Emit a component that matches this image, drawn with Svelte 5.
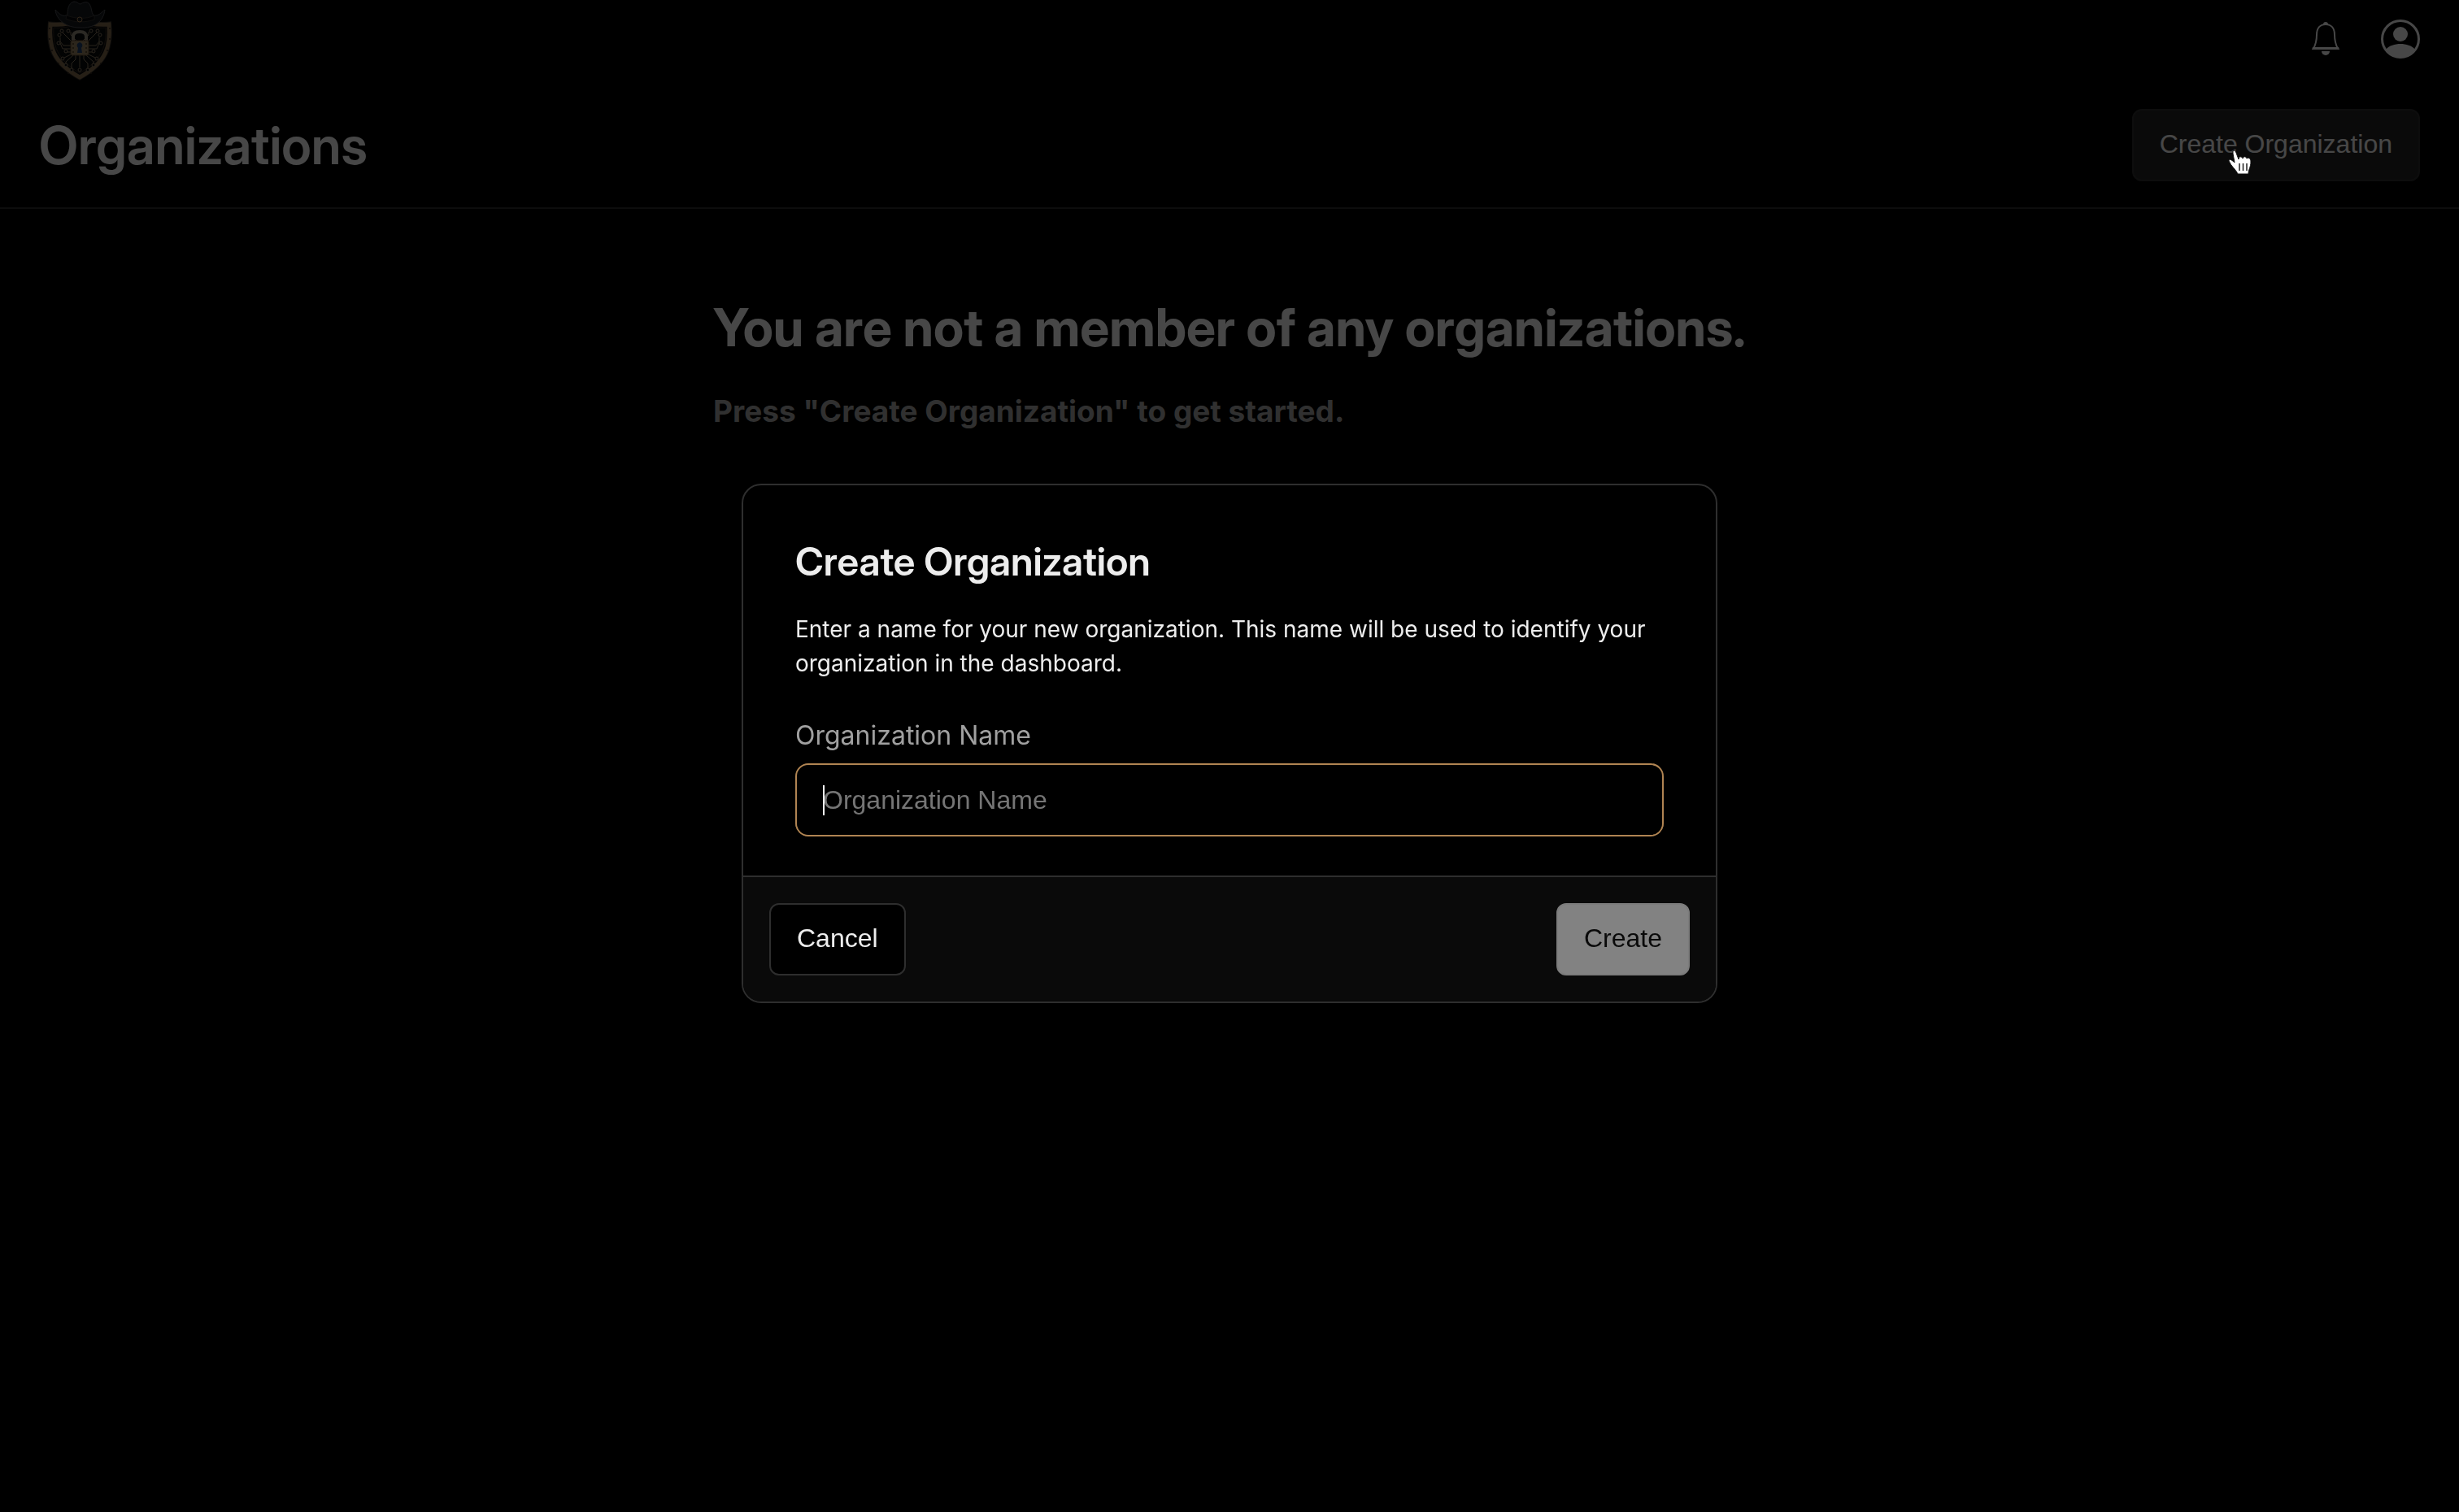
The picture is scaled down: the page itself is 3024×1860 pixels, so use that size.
<script lang="ts">
  let name: string = "";

  // circuit traces of the shield, mirrored around the lock
  const traces = [
    { d: "M49 56H38L34 51V46", x: 33, y: 43 },
    { d: "M49 60H37L34 53H33", x: 32, y: 53 },
    { d: "M49 64H42", x: 41, y: 63 },
    { d: "M50 68L41 76V78", x: 41, y: 80 },
    { d: "M53 68V73L48 78V84", x: 48, y: 86 },
    { d: "M55 51L47 43V39", x: 44, y: 38 },
    { d: "M50 53L42 45L37 40", x: 36, y: 38 },
    { d: "M49 66L39 71", x: 37, y: 72 },
  ];

  const rivets = [[21, 35], [21, 48], [24, 62], [32, 78], [44, 90]];
</script>

<div class="page">
  <header class="topbar">
    <a class="logo" href="/" aria-label="Home">
      <svg viewBox="0 0 120 110" aria-hidden="true">
        <path d="M58 22C43 27 31 28 19 26C16 57 20 78 58 99C96 78 100 57 97 26C85 28 73 27 58 22Z" fill="#2b2723" />
        <path d="M58 25C45 30 33 31 22 30C20 56 24 76 58 95C92 76 96 56 94 30C83 31 71 30 58 25Z" fill="#090a0c" stroke="#806a4c" stroke-width="5" />
        <path d="M58 29C46 33 35 35 26 34C25 55 29 72 58 90C87 72 91 55 90 34C81 35 70 33 58 29Z" fill="none" stroke="#34291f" stroke-width="1" />
        {#each [1, -1] as side}
          <g transform={side === 1 ? undefined : "translate(116 0) scale(-1 1)"}>
            {#each traces as trace}
              <path d={trace.d} fill="none" stroke="#85775f" stroke-width="1" />
              <circle cx={trace.x} cy={trace.y} r="2" fill="#090a0c" stroke="#85775f" />
            {/each}
            {#each rivets as [x, y]}
              <circle cx={x} cy={y} r="1" fill="#30261c" />
            {/each}
          </g>
        {/each}
        <path d="M58 68V83" stroke="#85775f" />
        <circle cx="58" cy="86" r="2" fill="#090a0c" stroke="#85775f" />
        <path d="M50 51V45Q50 39 58 39Q66 39 66 45V51" fill="none" stroke="#92897a" stroke-width="4" />
        <rect x="47" y="50" width="22" height="18" rx="2" fill="#94805e" stroke="#5e482e" />
        <path d="M58 52A4 4 0 0 0 56 59L55 65H61L60 59A4 4 0 0 0 58 52Z" fill="#203e68" />
        <g fill="#4b3923">
          <circle cx="50" cy="54" r="1" /><circle cx="50" cy="59" r="1" /><circle cx="50" cy="64" r="1" />
          <circle cx="66" cy="54" r="1" /><circle cx="66" cy="59" r="1" /><circle cx="66" cy="64" r="1" />
        </g>
        <path d="M28 12C34 19 39 21 43 18C43 8 46 3 51 2C56 2 56 5 59 5C62 3 67 1 70 5C73 9 72 15 75 19C81 20 84 16 89 12C87 27 76 35 58 34C41 34 29 24 28 12Z" fill="#17191d" stroke="#494b50" />
        <path d="M42 19C52 23 66 24 76 19L76 24C66 28 51 28 41 23Z" fill="#08090b" stroke="#33302c" />
        <circle cx="58" cy="24" r="3" fill="#17191d" stroke="#9d7a50" />
      </svg>
    </a>
    <nav class="actions">
      <button class="icon" type="button" aria-label="Notifications">
        <svg viewBox="0 0 48 48" aria-hidden="true">
          <path d="M24 3A3 3 0 0 1 27 6H21A3 3 0 0 1 24 3Z" fill="currentColor" />
          <path d="M24 6C17 6 13 11 13 19C13 28 11 32 9 36H39C37 32 35 28 35 19C35 11 31 6 24 6Z" fill="none" stroke="currentColor" stroke-width="2" />
          <path d="M8 34H40L41 37H7Z" fill="currentColor" />
          <path d="M19 39H29A5 5 0 0 1 19 39Z" fill="currentColor" />
        </svg>
      </button>
      <button class="icon" type="button" aria-label="Account">
        <svg viewBox="0 0 48 48" aria-hidden="true">
          <circle cx="24" cy="24" r="22.5" fill="none" stroke="currentColor" stroke-width="3" />
          <circle cx="24" cy="18" r="9" fill="currentColor" />
          <path d="M6 37C10 32 17 30 24 30C31 30 38 32 42 37C38 44 31 47 24 47C17 47 10 44 6 37Z" fill="currentColor" />
        </svg>
      </button>
    </nav>
  </header>

  <div class="titlebar">
    <h1>Organizations</h1>
    <button class="button" type="button">Create Organization</button>
  </div>

  <main class="empty">
    <div>
      <h2>You are not a member of any organizations.</h2>
      <h3>Press "Create Organization" to get started.</h3>
    </div>
  </main>
</div>

<div class="overlay">
  <form class="modal" role="dialog" aria-modal="true" aria-labelledby="modal-title" on:submit|preventDefault>
    <div class="modal-body">
      <h2 id="modal-title">Create Organization</h2>
      <p>Enter a name for your new organization. This name will be used to identify your organization in the dashboard.</p>
      <label for="org-name">Organization Name</label>
      <div class="field">
        <input id="org-name" type="text" placeholder="Organization Name" bind:value={name} />
        {#if !name}<span class="caret"></span>{/if}
      </div>
    </div>
    <footer>
      <button class="button cancel" type="button">Cancel</button>
      <button class="button create" type="submit" disabled={!name}>Create</button>
    </footer>
  </form>
</div>

<svg class="pointer" viewBox="0 0 30 32" aria-hidden="true">
  <path d="M6 2C8 0 9 2 10 4L13 12C13 8 17 8 18 11C19 8 22 8 23 11C25 9 28 11 28 15C28 22 25 24 25 30H12C10 25 4 21 1 14C1 11 4 12 8 16L6 5Z" fill="#fff" stroke="#111" stroke-width="1" />
  <path d="M14 17V26M18.5 17V26M23 17V26" stroke="#222" stroke-width="1.5" />
</svg>

<style>
  :global(body) {
    margin: 0;
    background: #000;
    color: #ededed;
    font-family: Inter, "Liberation Sans", sans-serif;
    font-size: 32px;
  }

  h1, h2, h3, p {
    margin: 0;
  }

  h1, h2 {
    font-family: "Inter Display", Inter, "Liberation Sans", sans-serif;
  }

  .topbar {
    display: flex;
    align-items: center;
    justify-content: space-between;
    height: 96px;
    padding: 0 48px 0 40px;
  }

  .logo {
    height: 96px;
  }

  .logo svg {
    display: block;
    width: 120px;
    height: 110px;
  }

  .actions {
    display: flex;
    gap: 44px;
  }

  .icon {
    width: 48px;
    height: 48px;
    padding: 0;
    border: 0;
    background: none;
    color: inherit;
  }

  .icon svg {
    display: block;
  }

  .titlebar {
    display: flex;
    align-items: center;
    justify-content: space-between;
    padding: 38px 48px 32px;
    border-bottom: 2px solid #2e2e2e;
  }

  h1 {
    font-size: 64px;
    line-height: 80px;
    font-weight: 600;
  }

  .button {
    box-sizing: border-box;
    height: 89px;
    padding: 0 32px 2px;
    border: 2px solid #2e2e2e;
    border-radius: 12px;
    background: #242424;
    color: #ededed;
    font-family: "Liberation Sans", Arial, sans-serif;
    font-size: 32px;
  }

  .empty {
    display: flex;
    justify-content: center;
    padding-top: 104px;
  }

  .empty h2 {
    font-size: 64px;
    line-height: 84px;
    font-weight: 700;
  }

  .empty h3 {
    margin-top: 37px;
    color: #a0a0a0;
    font-size: 37px;
    line-height: 48px;
    font-weight: 700;
  }

  .overlay {
    position: fixed;
    inset: 0;
    display: flex;
    align-items: center;
    justify-content: center;
    padding-bottom: 31px;
    background: rgba(0, 0, 0, 0.7);
  }

  .modal {
    box-sizing: border-box;
    width: 1200px;
    max-width: 100%;
    overflow: hidden;
    border: 2px solid #2e2e2e;
    border-radius: 24px;
    background: #000;
  }

  .modal-body {
    padding: 64px 64px 48px;
  }

  .modal-body h2 {
    font-size: 48px;
    line-height: 60px;
    font-weight: 600;
  }

  .modal-body p {
    margin-top: 32px;
    font-size: 28px;
    line-height: 42px;
  }

  label {
    display: block;
    margin: 48px 0 14px;
    color: #a0a0a0;
    line-height: 40px;
  }

  .field {
    position: relative;
  }

  input {
    display: block;
    box-sizing: border-box;
    width: 100%;
    height: 90px;
    padding: 0 32px;
    border: 2px solid #b08452;
    border-radius: 16px;
    outline: none;
    background: #000;
    color: #ededed;
    font-family: "Liberation Sans", Arial, sans-serif;
    font-size: 32px;
  }

  input::placeholder {
    color: #757575;
    opacity: 1;
  }

  .caret {
    position: absolute;
    top: 27px;
    left: 34px;
    width: 2px;
    height: 37px;
    background: #fff;
  }

  footer {
    display: flex;
    justify-content: space-between;
    padding: 32px;
    border-top: 2px solid #2e2e2e;
    background: #0a0a0a;
  }

  .cancel {
    background: #000;
  }

  .create {
    border-color: #7c7c7c;
    background: #828282;
    color: #0a0a0a;
  }

  .pointer {
    position: fixed;
    top: 184px;
    right: 254px;
    width: 30px;
    height: 32px;
  }
</style>
